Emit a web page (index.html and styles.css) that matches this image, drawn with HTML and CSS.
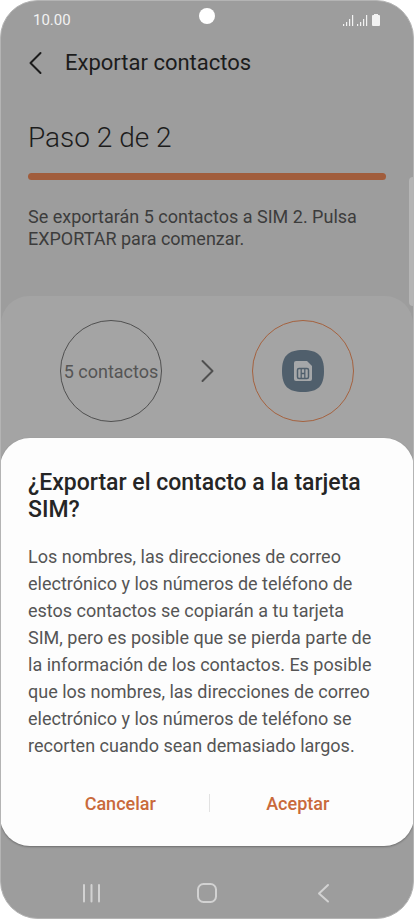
FILE: index.html
```html
<!DOCTYPE html>
<html lang="es">
<head>
<meta charset="utf-8">
<meta name="viewport" content="width=device-width, initial-scale=1">
<title>Exportar contactos</title>
<link rel="stylesheet" href="styles.css">
</head>
<body>
<div class="phone">
  <div class="status">
    <span class="clock">10.00</span>
    <span class="camera"></span>
    <svg class="indicators" width="38" height="14" viewBox="0 0 38 14" fill="#f2f2f2" aria-hidden="true">
      <path d="M0 11h1.200v2H0zM3 9h1.200v4H3zM6 6h1.200v7H6zM9 2h1.200v11H9zM14 11h1.200v2H14zM17 9h1.200v4H17zM20 6h1.200v7H20zM23 2h1.200v11H23z"/>
      <path d="M31 1h4v1h1q1 0 1 1v9q0 1-1 1h-6q-1 0-1-1V3q0-1 1-1h1z"/>
    </svg>
  </div>
  <header class="bar">
    <button class="icon-button" aria-label="Atrás">
      <svg width="14" height="24" viewBox="0 0 14 24" fill="none" stroke="#1c1c1c" stroke-width="2" stroke-linecap="round" stroke-linejoin="round"><path d="M11.500 2L1.500 12l10 10"/></svg>
    </button>
    <h1>Exportar contactos</h1>
  </header>
  <main>
    <section class="step">
      <h2>Paso 2 de 2</h2>
      <div class="progress"></div>
      <p>Se exportarán 5 contactos a SIM 2. Pulsa EXPORTAR para comenzar.</p>
    </section>
    <section class="transfer">
      <div class="circle">5 contactos</div>
      <svg width="14" height="24" viewBox="0 0 14 24" fill="none" stroke="#505050" stroke-width="2" stroke-linecap="round" stroke-linejoin="round" aria-hidden="true"><path d="M2.500 2l10 10-10 10"/></svg>
      <div class="circle target">
        <svg width="42" height="42" viewBox="0 0 42 42" role="img" aria-label="SIM 2">
          <path d="M21 0C36 0 42 6 42 21S36 42 21 42 0 36 0 21 6 0 21 0z" fill="#505f6c"/>
          <path d="M14 11h11l5 5v13q0 2-2 2H14q-2 0-2-2V13q0-2 2-2z" fill="#a5a7a9"/>
          <rect x="15.500" y="18.500" width="11" height="10" rx="1.500" fill="none" stroke="#505f6c" stroke-width="1.500"/>
          <path d="M19.200 18.500v10M22.800 18.500v10M19.200 23.500h3.600" fill="none" stroke="#505f6c" stroke-width="1.300"/>
        </svg>
      </div>
    </section>
  </main>
  <span class="edge-handle"></span>
  <div class="dialog" role="dialog" aria-labelledby="dialog-title">
    <h2 id="dialog-title">¿Exportar el contacto a la tarjeta SIM?</h2>
    <p>Los nombres, las direcciones de correo electrónico y los números de teléfono de estos contactos se copiarán a tu tarjeta SIM, pero es posible que se pierda parte de la información de los contactos. Es posible que los nombres, las direcciones de correo electrónico y los números de teléfono se recorten cuando sean demasiado largos.</p>
    <div class="actions">
      <button>Cancelar</button>
      <span class="divider"></span>
      <button>Aceptar</button>
    </div>
  </div>
  <nav class="system-nav">
    <button class="icon-button" aria-label="Recientes"><svg width="20" height="20" viewBox="0 0 20 20" fill="none" stroke="#d2d2d2" stroke-width="2" stroke-linecap="round"><path d="M3 2v16.500M10.500 2v16.500M18 2v16.500"/></svg></button>
    <button class="icon-button" aria-label="Inicio"><svg width="20" height="20" viewBox="0 0 20 20" fill="none" stroke="#d2d2d2" stroke-width="2"><rect x="1" y="1" width="18" height="18" rx="5.500"/></svg></button>
    <button class="icon-button" aria-label="Volver"><svg width="20" height="20" viewBox="0 0 20 20" fill="none" stroke="#d2d2d2" stroke-width="2" stroke-linecap="round" stroke-linejoin="round"><path d="M15 2L6 10.500 15 18.500"/></svg></button>
  </nav>
</div>
</body>
</html>
```
FILE: styles.css
```css
* {
  box-sizing: border-box;
}

body {
  margin: 0;
  background: #fff;
  font-family: Roboto, sans-serif;
}

h1, h2, p {
  margin: 0;
}

button {
  padding: 0;
  border: 0;
  background: none;
  font: inherit;
}

.phone {
  position: relative;
  display: flex;
  flex-direction: column;
  min-height: calc(100vh - 1px);
  overflow: hidden;
  border: 1px solid #b4b4b4;
  border-radius: 38px;
  background: #9d9d9d;
}

.status {
  display: grid;
  grid-template-columns: 1fr auto 1fr;
  align-items: center;
  height: 38px;
  padding: 0 32px;
}

.clock {
  color: #f2f2f2;
  font-size: 15px;
  line-height: 20px;
}

.camera {
  width: 16px;
  height: 16px;
  margin-bottom: 8px;
  border-radius: 50%;
  background: #fff;
}

.indicators {
  justify-self: end;
}

.bar {
  display: flex;
  align-items: center;
  gap: 22px;
  height: 48px;
  padding: 0 28px;
}

.icon-button {
  display: flex;
}

.bar h1 {
  color: #1c1c1c;
  font-size: 22px;
  font-weight: 400;
  line-height: 28px;
}

.step {
  padding: 33px 27px 46px;
}

.step h2 {
  color: #1c1c1c;
  font-size: 28px;
  font-weight: 300;
  line-height: 36px;
}

.progress {
  height: 7px;
  margin: 17px 0 26px;
  border-radius: 4px;
  background: #a15d3c;
}

.step p {
  color: #3c3c3c;
  font-size: 18px;
  line-height: 22px;
}

.transfer {
  display: flex;
  align-items: center;
  justify-content: center;
  gap: 38px;
  min-height: 180px;
  padding: 24px 0 56px;
  border-radius: 28px 28px 0 0;
  background: #a4a4a4;
}

.circle {
  display: flex;
  align-items: center;
  justify-content: center;
  width: 102px;
  height: 102px;
  border: 1px solid #505050;
  border-radius: 50%;
  color: #555;
  font-size: 18px;
  white-space: nowrap;
}

.target {
  border-color: #a5623f;
}

.edge-handle {
  position: absolute;
  top: 176px;
  right: 0;
  width: 4px;
  height: 129px;
  border-radius: 4px 0 0 4px;
  background: #b5b5b5;
}

.dialog {
  position: absolute;
  right: -1px;
  bottom: 72px;
  left: -1px;
  padding: 31px 28px 27px;
  border-radius: 30px;
  background: #fdfdfd;
  box-shadow: 0 1px 2px rgba(0, 0, 0, 0.3);
}

.dialog h2 {
  color: #252525;
  font-size: 23px;
  font-weight: 500;
  line-height: 27px;
}

.dialog p {
  margin: 20px 0 28px;
  padding-right: 8px;
  color: #555;
  font-size: 18px;
  line-height: 27px;
}

.actions {
  display: flex;
  align-items: center;
  padding-left: 4px;
}

.actions button {
  flex: 1;
  height: 32px;
  color: #c96a3b;
  font-size: 18px;
  font-weight: 500;
}

.divider {
  width: 1px;
  height: 18px;
  background: #e2e2e2;
}

.system-nav {
  display: flex;
  justify-content: space-between;
  margin-top: auto;
  padding: 0 80px 15px;
}
```
